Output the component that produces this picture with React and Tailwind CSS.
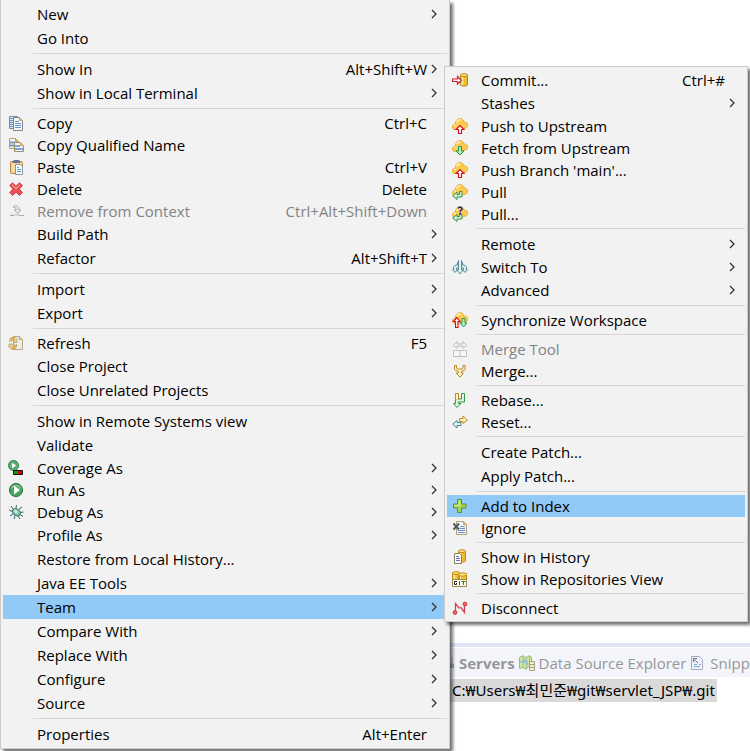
import React from "react";

function Svg({ children }) {
  return (
    <svg width="16" height="16" viewBox="0 0 16 16" fill="none" aria-hidden="true" className="block shrink-0">
      {children}
    </svg>
  );
}

const CopyIcon = () => (
  <Svg>
    <path d="M1.500 1.500h8v12h-8z" fill="#dfe9f5" stroke="#6d8fa6" />
    <path d="M2 3.500h3M2 5.500h3M2 7.500h3M2 9.500h3M2 11.500h3" stroke="#6f93bd" />
    <path d="M5.500 2.500h6l3 3v10h-9z" fill="#f4f8fd" stroke="#7c8a86" />
    <path d="M11.500 2.500v3h3z" fill="#e9c874" stroke="#c9a45a" />
    <path d="M7 6.500h4M7 8.500h6M7 10.500h6M7 12.500h6" stroke="#6f93cd" />
  </Svg>
);

const CopyNameIcon = () => (
  <Svg>
    <path d="M1.500 1.500h6l3 3v7h-9z" fill="#eef3fb" stroke="#b5a36a" />
    <path d="M7.500 1.500v3h3z" fill="#e9c874" stroke="#c9a45a" />
    <path d="M2 5.500h5M2 8.500h4" stroke="#7f97c4" strokeWidth="2" />
    <path d="M6.500 5.500h6l3 3v6h-9z" fill="#eef3fb" stroke="#9b9268" />
    <path d="M12.500 5.500v3h3z" fill="#e9c874" stroke="#c9a45a" />
    <path d="M7 9h5M7 12h8" stroke="#8ba3d0" strokeWidth="2" />
  </Svg>
);

const PasteIcon = () => (
  <Svg>
    <rect x="2.500" y="2.500" width="12" height="12" rx="1" fill="#f6cd8c" stroke="#c08a45" />
    <path d="M4 4h9v9H4z" fill="#fbdba2" />
    <path d="M5 3.500h7v-1l-1.500-1h-4L5 2.500z" fill="#7583a6" stroke="#56658c" />
    <path d="M7.500 5.500h5l2 2v8h-7z" fill="#f5faff" stroke="#8a96a0" />
    <path d="M9 8.500h2M9 10.500h4M9 12.500h4" stroke="#62a0c8" />
  </Svg>
);

const DeleteIcon = () => (
  <Svg>
    <path
      d="M1.800 4.500 4.500 1.800 8 5.200 11.500 1.800 14.500 4.500 11.200 8l3.300 3.500-3 2.900L8 11.200l-3.500 3.200L1.800 11.500 5.100 8z"
      fill="#ea5256"
      stroke="#cf3a40"
      strokeLinejoin="round"
    />
    <path d="m4 4 4 3.500L12 4" stroke="#f38c8a" strokeWidth="1.400" />
  </Svg>
);

const RemoveIcon = () => (
  <Svg>
    <path d="M5.500 3.500c4-1.500 6 .5 5.500 3.500h2L9.500 10.500 6 7h2c.3-1.500-.5-2.500-2.500-2.500z" fill="#e2e2e2" stroke="#b0b0b0" />
    <path d="M2 12.500h4M11 12.500h5" stroke="#a8a8a8" />
    <path d="M4 10.500l2 2 2-1 2 1 1-2" stroke="#c0c0c0" />
  </Svg>
);

const RefreshIcon = () => (
  <Svg>
    <path d="M5.500 1.500h6l3 3v10h-9z" fill="#e2edfb" stroke="#b7a978" />
    <path d="M11.500 1.500v3h3z" fill="#f6e2ae" stroke="#c9ab5e" />
    <path d="M2.500 6.500C2.500 3.500 5 2.500 7 4M7.500 9.500C8 12.500 5 14 3 12.500" stroke="#c79a3c" strokeWidth="3" />
    <path d="M2.500 6.500C2.500 3.500 5 2.500 7 4M7.500 9.500C8 12.500 5 14 3 12.500" stroke="#f8da8c" />
    <path d="M5.500 7.500h3.500V3.500zM4.500 9H1v4z" fill="#f8da8c" stroke="#c79a3c" strokeWidth=".7" />
  </Svg>
);

const CoverageIcon = () => (
  <Svg>
    <circle cx="5.500" cy="5.500" r="5" fill="#5cae70" stroke="#2f8049" />
    <path d="M4 2.700v5.600l4.200-2.800z" fill="#fff" />
    <path d="M5.500 10.500h9v4h-9z" fill="#0d9c18" stroke="#111" />
    <path d="M10 11h4v3h-4z" fill="#d80008" />
  </Svg>
);

const RunIcon = () => (
  <Svg>
    <circle cx="8" cy="8" r="6.600" fill="#48a35f" stroke="#2c7d47" />
    <path d="M3.500 6.500a5 5 0 0 1 9 0" stroke="#86c795" strokeWidth="1.500" />
    <path d="M6 3.500v9L12 8z" fill="#fff" />
  </Svg>
);

const DebugIcon = () => (
  <Svg>
    <path
      d="M5 5 3 2M8 4l.5-3M11 5l3-2M4.500 7.500 1 6M12 8.500l3.500-.5M5 10l-3 2M7 11.500 6 15M10 12l2 3M12 10.500l3 2"
      stroke="#35606b"
    />
    <ellipse cx="8.500" cy="8.300" rx="4.300" ry="3.200" transform="rotate(35 8.500 8.300)" fill="#8fc6a8" stroke="#356f78" />
    <ellipse cx="7.800" cy="7.500" rx="2" ry="1.200" transform="rotate(35 7.800 7.500)" fill="#d5eddc" />
  </Svg>
);

const Cloud = () => (
  <>
    <path
      d="M3 11.500C1.300 11.500.4 10.300.4 8.900.4 7.400 1.700 6 3.400 6 3.400 2.800 5.200.5 7.800.5c2.300 0 3.700 1.500 4 3.500 2.200-.4 3.900 1 3.900 2.900 0 2.500-1.900 3.700-4.100 3.400-1.300 1.400-3 1.600-4.600.6-1.200.6-2.700.9-4 .6z"
      fill="#fdcb4e"
      stroke="#e5a836"
      strokeWidth=".9"
    />
    <path d="M4.800 4.500C5.400 2.300 7 1.600 8.600 2M2.300 8.200c.4-.8 1-1 1.800-1" stroke="#fff0b8" strokeWidth="1.500" />
  </>
);

const CommitIcon = () => (
  <Svg>
    <path d="M8.500 3v10c1 1.500 6 1.500 7 0V3z" fill="#f0bd2e" stroke="#bd8516" />
    <path d="M10.500 4v9" stroke="#fff0a8" strokeWidth="1.500" />
    <ellipse cx="12" cy="3.200" rx="3.500" ry="1.500" fill="#ffe47c" stroke="#bd8516" />
    <path d="M.5 7h5V4.500L9.300 8.300 5.500 12V9.500h-5z" fill="#fff" stroke="#d3202a" strokeWidth="1.200" />
  </Svg>
);

const PushIcon = () => (
  <Svg>
    <Cloud />
    <path d="M6.500 15.500v-4H4l4-4 4 4H9.500v4z" fill="#fff" stroke="#d3141f" strokeWidth="1.200" />
  </Svg>
);

const FetchIcon = () => (
  <Svg>
    <Cloud />
    <path d="M6.500 6.500v4.500H4l4 4 4-4H9.500V6.500z" fill="#b4ebb8" stroke="#2f9449" />
  </Svg>
);

const PullIcon = () => (
  <Svg>
    <Cloud />
    <path d="M7.500 7.500v3H5V8L.7 11.700 5 15.500V13h5V7.500z" fill="#d0f2d4" stroke="#35914b" />
  </Svg>
);

const PullAskIcon = () => (
  <Svg>
    <Cloud />
    <path d="M7.500 8.500v2H5V8.500L.7 12 5 15.500V13h5V8.500z" fill="#d0f2d4" stroke="#35914b" />
    <path d="M6 2.500c.5-1.800 4-1.800 4 .3 0 1.500-1.800 1.300-1.800 3M7.400 7.500h1.800" stroke="#1d1aa0" strokeWidth="1.500" />
  </Svg>
);

const SwitchIcon = () => (
  <Svg>
    <path
      d="M5.500 3v3h-2l-2 2v2.500H.5L3 13.500l2.500-3h-1V9h1.500M10.500 3v3h2l2 2v2.500h1L13 13.500l-2.500-3h1V9H10"
      fill="#d3eff2"
      stroke="#5b8f98"
    />
    <path d="M6.500 1v10H5l3 4 3-4H9.500V1" fill="#e4f5f7" stroke="#5b8f98" />
  </Svg>
);

const SyncIcon = () => (
  <Svg>
    <Cloud />
    <path d="M3.500 15.500V9.500h-2l3.300-4 3.200 4H6v6z" fill="#fff" stroke="#d3141f" strokeWidth="1.200" />
    <path d="M10 6.500V11H8l3.500 4 3.500-4h-2V6.500z" fill="#b4ebb8" stroke="#2f9449" />
  </Svg>
);

const MergeToolIcon = () => (
  <Svg>
    <path d="M1.500 4 5 .7V3h6V.7L14.500 4 11 7.300V5H5v2.300z" fill="#f7f7f7" stroke="#b8b8b8" />
    <path d="M1.500 9.500h13v6h-13zM8 9.500v6" fill="#f7f7f7" stroke="#c0c0c0" />
  </Svg>
);

const MergeIcon = () => (
  <Svg>
    <path
      d="M2.500 2.500h2v2.500c0 1 1.500 1 3.500 1s3-.3 3-1V2.500h2V6c0 1.500-1.500 2-3.500 2v2h2L8 14.200 4.200 10h2V8C4 8 2.500 7.500 2.500 6z"
      fill="#fdeebc"
      stroke="#b98a28"
    />
  </Svg>
);

const RebaseIcon = () => (
  <Svg>
    <path d="M9.500 1.500h3V10H6.500v1.500H9L5 15.500 1.500 11.500h2V7h6z" fill="#d9f5dc" stroke="#3b9547" />
    <path d="M3.500 7.500v-6h3v6" fill="#fff2c2" stroke="#bf8a28" />
  </Svg>
);

const ResetIcon = () => (
  <Svg>
    <path d="M7.500 4.500H11V2l4.500 4L11 9.500V7.500H7.500z" fill="#fff2c2" stroke="#c48a28" />
    <path d="M9 8.500H5V6.500L.7 10 5 14v-2.500h4z" fill="#e0f3f5" stroke="#4f838e" />
  </Svg>
);

const AddIcon = () => (
  <Svg>
    <path d="M5.500 1.500h4v4.500h4.500v4H9.500v4.500h-4V10H1.500V6h4z" fill="#a8d454" stroke="#5d8f3d" />
    <path d="M7.500 2.500v5.500M2.500 7.500H7" stroke="#dcf2a4" />
  </Svg>
);

const IgnoreIcon = () => (
  <Svg>
    <path d="M4.500 1.500h7l3 3v10h-10z" fill="#eff5fc" stroke="#b0a274" />
    <path d="M11.500 1.500v3h3z" fill="#e9c874" stroke="#c9a45a" />
    <path d="M8 6.500h5M8 8.500h5M6 10.500h7M6 12.500h7" stroke="#6f93cd" />
    <path d="m1.500 3.500 5.500 6M7 3.500l-5.500 6" stroke="#55595f" strokeWidth="2" />
  </Svg>
);

const HistoryIcon = () => (
  <Svg>
    <path d="M6.500 2v10c1 1.500 6 1.500 7 0V2z" fill="#f0bd2e" stroke="#c38e1c" />
    <path d="M8.500 3v9" stroke="#fff0a8" />
    <ellipse cx="10" cy="2.200" rx="3.500" ry="1.500" fill="#ffe47c" stroke="#c38e1c" />
    <path d="M2.500 4.500h5l2 2v8h-7z" fill="#fff" stroke="#8a7f58" />
    <path d="M4 7.500h3M4 9.500h4M4 11.500h4" stroke="#4b78c8" />
  </Svg>
);

const ReposIcon = () => (
  <Svg>
    <path d="M.5 2v9h7V2zM6.500 2.500V11h8v-8.500z" fill="#efc034" stroke="#c38e1c" />
    <ellipse cx="4" cy="2" rx="3.500" ry="1.400" fill="#ffe47c" stroke="#c38e1c" />
    <ellipse cx="10.500" cy="3.500" rx="4" ry="1.700" fill="#ffe47c" stroke="#c38e1c" />
    <path d="M8.500 5.500V8M2.500 4v4" stroke="#fff0a8" />
    <path d="M.5 8.500h14v7H.5z" fill="#fbf7ea" stroke="#a08a4c" />
    <path d="M5 10.500H2.500v3h2V12" stroke="#222" />
    <path d="M7.500 10v4" stroke="#c22" />
    <path d="M9.500 10.500h4M11.500 10.500V14" stroke="#2a8a38" />
  </Svg>
);

const DisconnectIcon = () => (
  <Svg>
    <path d="M3.500 12V3.500l4 5M8.500 7l4 5.500V5" stroke="#d6404a" strokeWidth="1.300" />
    <circle cx="3" cy="12.500" r="1.900" fill="#ee6a70" stroke="#cf3840" />
    <circle cx="13" cy="4" r="1.900" fill="#ee6a70" stroke="#cf3840" />
  </Svg>
);

const DataSourceIcon = () => (
  <Svg>
    <path d="M.5 2.500 4 .7l3 2 3-2 2.500 1.500v10l-2.500-1-3 3.300-3-2-3.500 1z" fill="#cfe89a" stroke="#9cb884" />
    <path d="M4 1v11M7.500 3v11M10.500 1v10" stroke="#a3bd92" />
    <path d="M1 7h6l2 3M4 4l5 4" stroke="#8fc0d8" strokeWidth="1.600" />
    <path d="M10.500 6.500h5v9h-5z" fill="#f2ecd4" stroke="#a79f82" />
    <path d="M11 9.500h4M11 12.500h4" stroke="#a79f82" />
  </Svg>
);

const SnippetsIcon = () => (
  <Svg>
    <path d="M1.500 1.500h8l3 3v10h-11z" fill="#eef2fa" stroke="#a3abc4" />
    <path d="m3.500 4 4.500 4M3.500 7V3.500H7" stroke="#70758c" />
    <path d="M4 9.500h3M4 11.500h6" stroke="#7fa8cf" />
    <path d="M9 9.500h2" stroke="#d69292" />
  </Svg>
);

const SEP = "separator";

const contextMenu = [
  { label: "New", sub: true },
  { label: "Go Into" },
  SEP,
  { label: "Show In", keys: "Alt+Shift+W", sub: true },
  { label: "Show in Local Terminal", sub: true },
  SEP,
  { label: "Copy", keys: "Ctrl+C", icon: CopyIcon },
  { label: "Copy Qualified Name", icon: CopyNameIcon },
  { label: "Paste", keys: "Ctrl+V", icon: PasteIcon },
  { label: "Delete", keys: "Delete", icon: DeleteIcon },
  { label: "Remove from Context", keys: "Ctrl+Alt+Shift+Down", icon: RemoveIcon, disabled: true },
  { label: "Build Path", sub: true },
  { label: "Refactor", keys: "Alt+Shift+T", sub: true },
  SEP,
  { label: "Import", sub: true },
  { label: "Export", sub: true },
  SEP,
  { label: "Refresh", keys: "F5", icon: RefreshIcon },
  { label: "Close Project" },
  { label: "Close Unrelated Projects" },
  SEP,
  { label: "Show in Remote Systems view" },
  { label: "Validate" },
  { label: "Coverage As", icon: CoverageIcon, sub: true },
  { label: "Run As", icon: RunIcon, sub: true },
  { label: "Debug As", icon: DebugIcon, sub: true },
  { label: "Profile As", sub: true },
  { label: "Restore from Local History..." },
  { label: "Java EE Tools", sub: true },
  { label: "Team", sub: true, active: true },
  { label: "Compare With", sub: true },
  { label: "Replace With", sub: true },
  { label: "Configure", sub: true },
  { label: "Source", sub: true },
  SEP,
  { label: "Properties", keys: "Alt+Enter" },
];

const teamMenu = [
  { label: "Commit...", keys: "Ctrl+#", icon: CommitIcon },
  { label: "Stashes", sub: true },
  { label: "Push to Upstream", icon: PushIcon },
  { label: "Fetch from Upstream", icon: FetchIcon },
  { label: "Push Branch 'main'...", icon: PushIcon },
  { label: "Pull", icon: PullIcon },
  { label: "Pull...", icon: PullAskIcon },
  SEP,
  { label: "Remote", sub: true },
  { label: "Switch To", icon: SwitchIcon, sub: true },
  { label: "Advanced", sub: true },
  SEP,
  { label: "Synchronize Workspace", icon: SyncIcon },
  SEP,
  { label: "Merge Tool", icon: MergeToolIcon, disabled: true },
  { label: "Merge...", icon: MergeIcon },
  SEP,
  { label: "Rebase...", icon: RebaseIcon },
  { label: "Reset...", icon: ResetIcon },
  SEP,
  { label: "Create Patch..." },
  { label: "Apply Patch..." },
  SEP,
  { label: "Add to Index", icon: AddIcon, active: true },
  { label: "Ignore", icon: IgnoreIcon },
  SEP,
  { label: "Show in History", icon: HistoryIcon },
  { label: "Show in Repositories View", icon: ReposIcon },
  SEP,
  { label: "Disconnect", icon: DisconnectIcon },
];

function MenuRow({ item }) {
  const Icon = item.icon;
  return (
    <li role="none">
      <button
        type="button"
        role="menuitem"
        disabled={item.disabled}
        aria-haspopup={item.sub ? "menu" : undefined}
        className={`flex w-full items-center pr-2.5 pl-[5px] text-left whitespace-nowrap ${Icon ? "h-[22px]" : "h-6"} ${
          item.active ? "bg-[#91c9f7]" : ""
        } ${item.disabled ? "text-[#838383]" : "text-black"}`}
      >
        <span className="w-[29px] shrink-0">{Icon && <Icon />}</span>
        <span className="flex-1">{item.label}</span>
        <span>{item.keys}</span>
        <span className="flex w-2.5 shrink-0 justify-end">
          {item.sub && (
            <svg width="6" height="10" viewBox="0 0 6 10" fill="none" aria-hidden="true">
              <path d="M1 1l4 4-4 4" stroke="#333" strokeWidth="1.300" />
            </svg>
          )}
        </span>
      </button>
    </li>
  );
}

function Menu({ label, items, className }) {
  return (
    <ul
      role="menu"
      aria-label={label}
      className={`border-[#ccc] bg-[#f2f2f2] px-0.5 shadow-[3px_3px_3px_rgba(0,0,0,0.55)] ${className}`}
    >
      {items.map((item, i) =>
        item === SEP ? (
          <li key={i} role="separator" className="py-[3px] pl-[30px]">
            <div className="h-px bg-[#d7d7d7]" />
          </li>
        ) : (
          <MenuRow key={i} item={item} />
        )
      )}
    </ul>
  );
}

function BottomView() {
  return (
    <section className="flex h-[108px] flex-col pl-[450px] whitespace-nowrap">
      <div className="h-1 shrink-0 bg-[#dfe5f5]" />
      <nav className="mt-px flex h-[29px] shrink-0 items-center gap-1 bg-[#f4f5fb] text-[#969696]">
        <button type="button" className="flex items-center gap-1 font-bold">
          <svg width="5" height="16" viewBox="0 0 5 16" fill="none" aria-hidden="true">
            <path d="M2 2v7" stroke="#9db0cd" />
            <circle cx="2" cy="11" r="1.800" fill="#c5d2e8" stroke="#7f93b8" />
          </svg>
          Servers
        </button>
        <button type="button" className="flex items-center gap-1">
          <DataSourceIcon />
          Data Source Explorer
        </button>
        <button type="button" className="flex items-center gap-1">
          <SnippetsIcon />
          Snippets
        </button>
      </nav>
      <p className="mt-0.5 h-[23px] self-start bg-[#d9d9d9] px-0.5 font-['Noto_Sans','Noto_Sans_CJK_KR',sans-serif] leading-[23px] text-black">
        C:₩Users₩최민준₩git₩servlet_JSP₩.git
      </p>
    </section>
  );
}

export default function App() {
  return (
    <main className="relative flex min-h-screen flex-col justify-end overflow-hidden bg-white font-['Open_Sans','Noto_Sans_CJK_KR',sans-serif] text-[15px] leading-5">
      <BottomView />
      <Menu label="Project" items={contextMenu} className="absolute top-0 left-0 w-[450px] border-x border-b py-0.5" />
      <Menu label="Team" items={teamMenu} className="absolute top-[66px] left-[444px] w-[304px] border py-0.5" />
    </main>
  );
}
